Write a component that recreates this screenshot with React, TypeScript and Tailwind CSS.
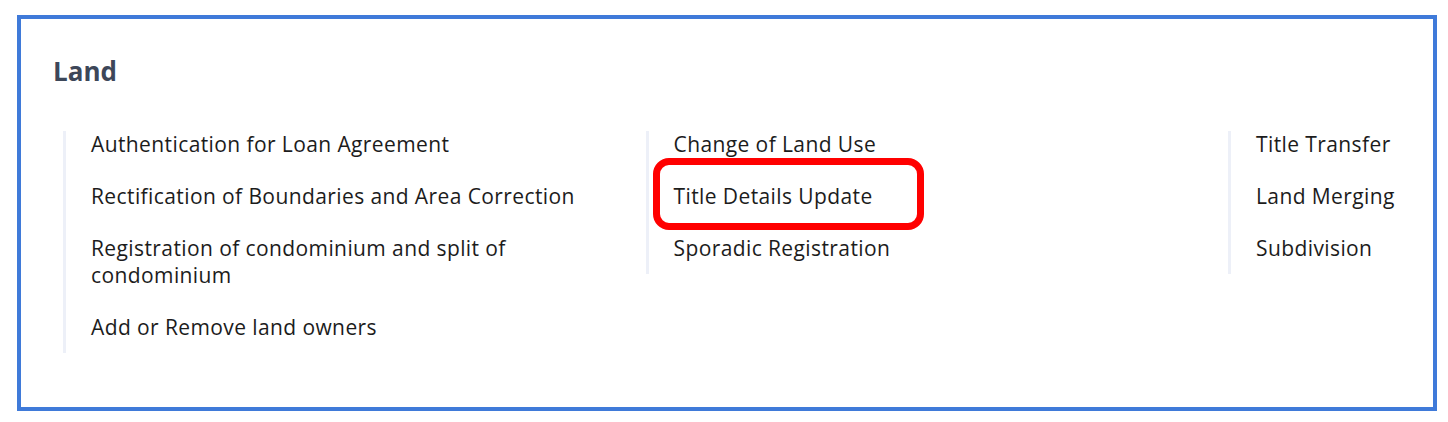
import React from 'react';

const columns: string[][] = [
  [
    'Authentication for Loan Agreement',
    'Rectification of Boundaries and Area Correction',
    'Registration of condominium and split of condominium',
    'Add or Remove land owners',
  ],
  ['Change of Land Use', 'Title Details Update', 'Sporadic Registration'],
  ['Title Transfer', 'Land Merging', 'Subdivision'],
];

export default function App() {
  return (
    <div className="w-[1448px] h-[422px] bg-white pl-[17px] pt-[15px]" style={{ fontFamily: '"Open Sans", Lato, sans-serif' }}>
      <div className="w-[1420px] h-[396px] border-4 border-[#3f7ad9] overflow-hidden">
        <div className="pl-[32px] pt-[32px]">
          <h2 className="text-[26px] leading-[40px] font-bold text-[#3d4759]">Land</h2>
          <div className="mt-[40px] ml-[10px] flex">
            {columns.map((items, ci) => (
              <div key={ci} className="w-[582.5px] shrink-0 self-start">
                <ul className="border-l-[3px] border-[#edf0f8] pl-[25px] pb-[12px] flex flex-col gap-[25px] w-[530px]">
                  {items.map((item) => (
                    <li key={item} className="relative text-[21px] leading-[27px] tracking-[0.4px] text-[#1c1c1c]">
                      {item}
                      {item === 'Title Details Update' && (
                        <span className="absolute -left-[21px] -top-[25px] w-[271px] h-[72px] border-[7px] border-[#ff0000] rounded-[16px]" />
                      )}
                    </li>
                  ))}
                </ul>
              </div>
            ))}
          </div>
        </div>
      </div>
    </div>
  );
}
